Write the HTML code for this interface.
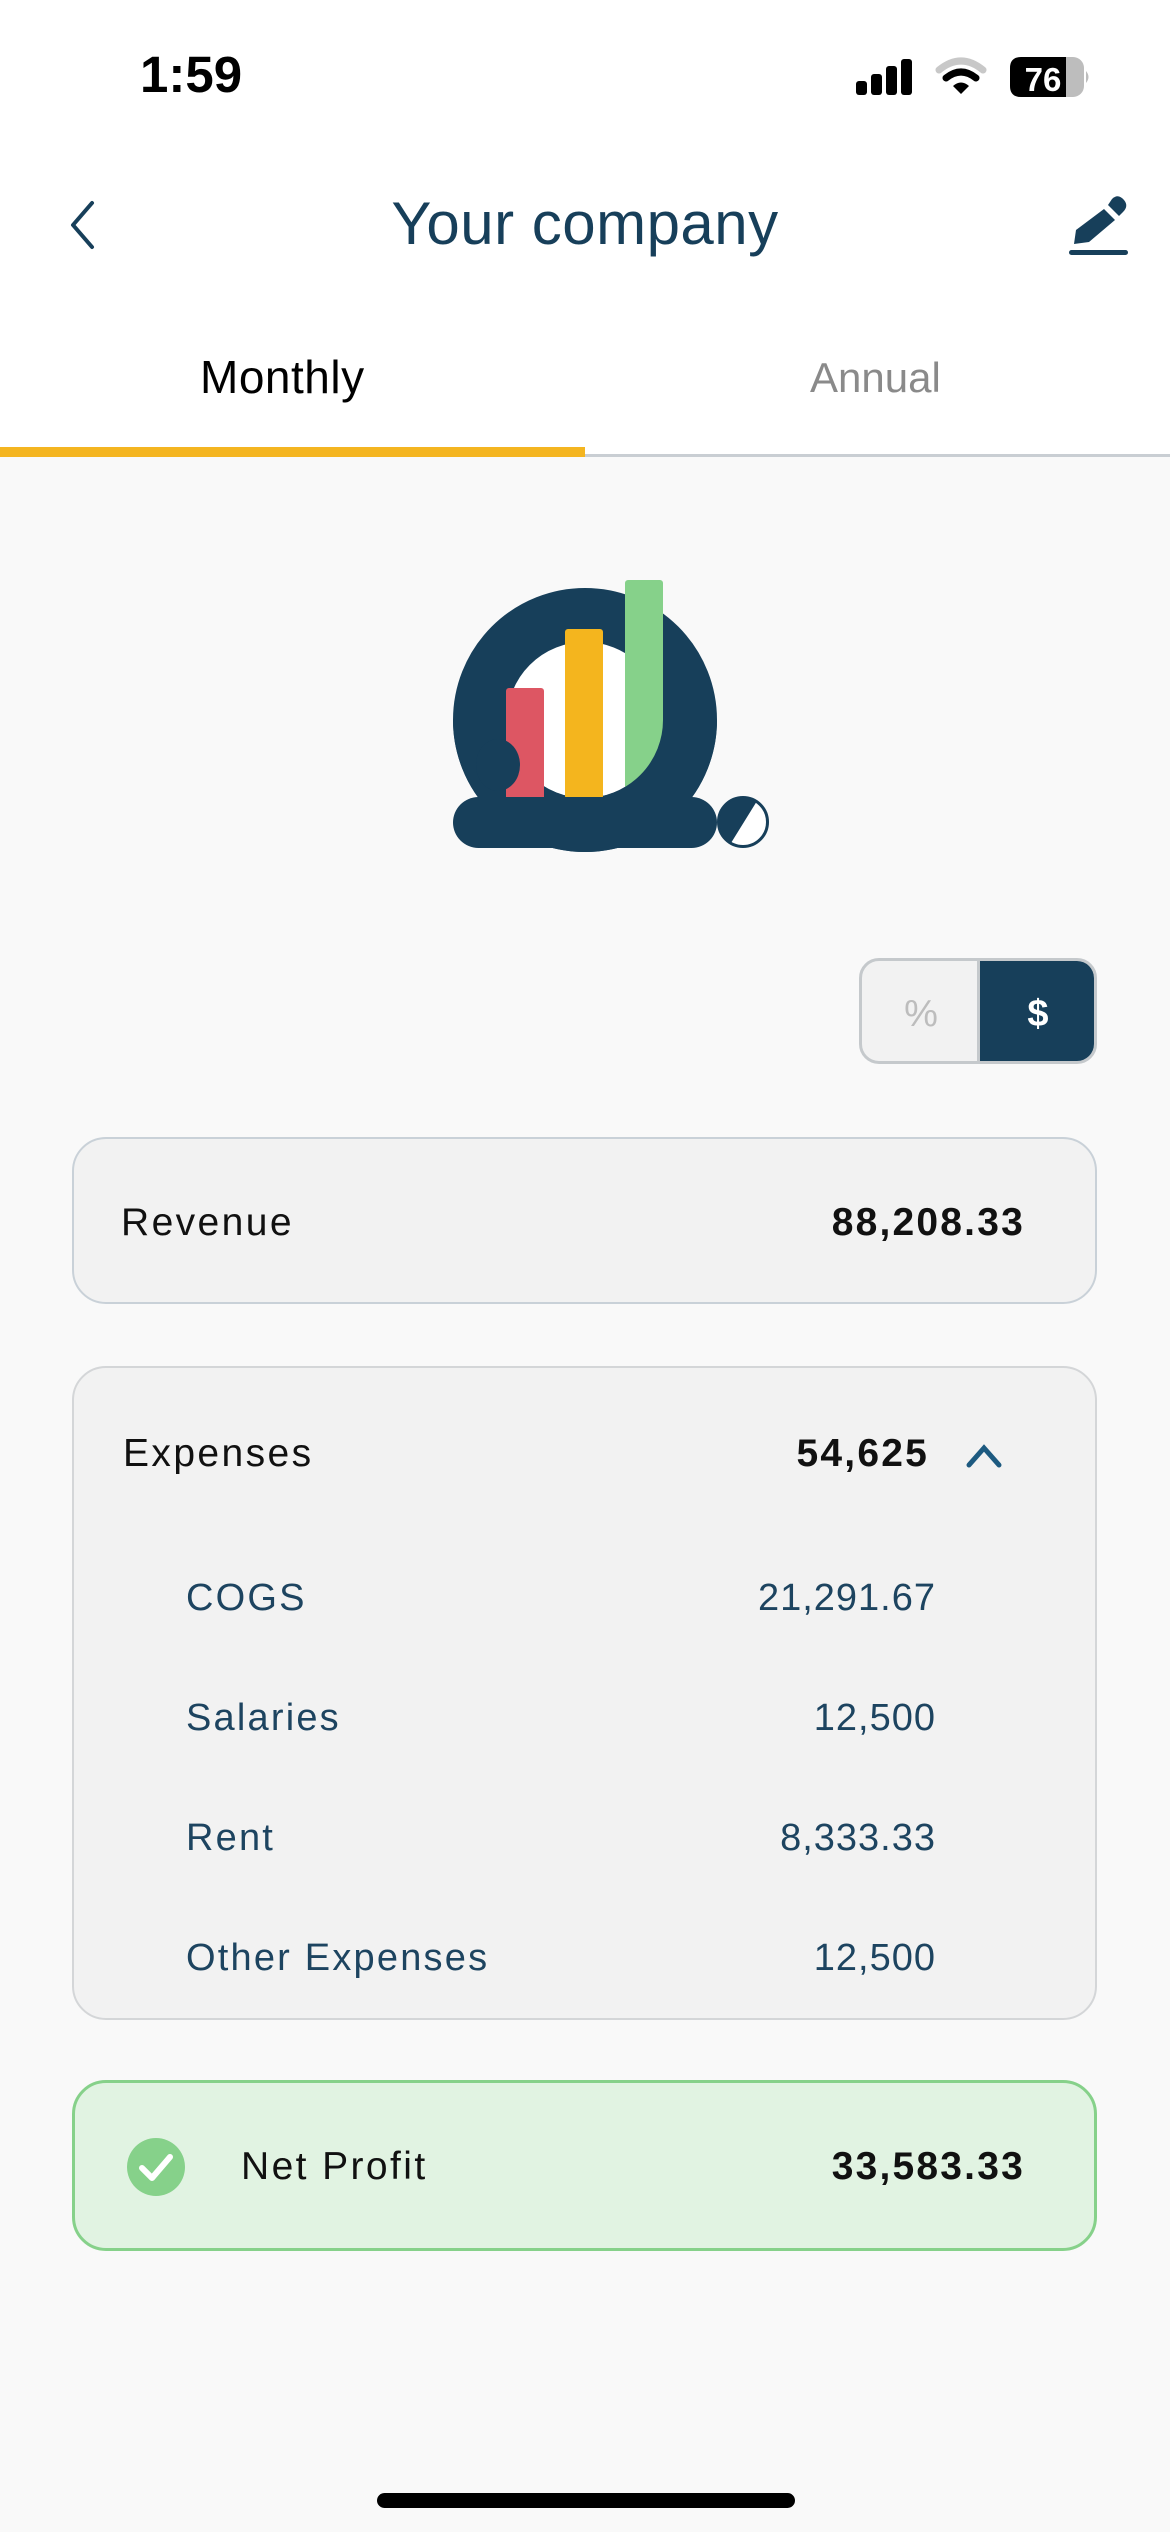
<!DOCTYPE html>
<html><head><meta charset="utf-8">
<style>
*{margin:0;padding:0;box-sizing:border-box}
body{width:1170px;height:2532px;background:#f9f9f9;position:relative;overflow:hidden;font-family:"Liberation Sans",sans-serif}
.a{position:absolute;white-space:nowrap}
.card{position:absolute;left:72px;width:1025px;border-radius:34px;background:#f2f2f2;border:2px solid #c9d1d8}
.lbl{font-size:39px;color:#111;letter-spacing:2.4px}
.num{font-size:39px;font-weight:bold;color:#111;letter-spacing:2.2px}
.it{font-size:38px;color:#1d4460;letter-spacing:2.2px}
</style></head><body>
<div class="a" style="left:0;top:0;width:1170px;height:456px;background:#fff"></div>
<div class="a" style="left:140px;top:45px;font-size:51px;font-weight:bold;color:#000;line-height:60px">1:59</div>
<svg class="a" style="left:850px;top:55px" width="250" height="45">
 <rect x="6" y="26" width="11" height="14" rx="3" fill="#000"/>
 <rect x="21" y="19" width="11" height="21" rx="3" fill="#000"/>
 <rect x="36" y="11" width="11" height="29" rx="3" fill="#000"/>
 <rect x="51" y="4" width="11" height="36" rx="3" fill="#000"/>
 <path d="M89 15 Q111 -3 133 15" stroke="#c8c8c8" stroke-width="7" fill="none" stroke-linecap="round"/>
 <path d="M96 23 Q111 11 126 23" stroke="#000" stroke-width="7" fill="none" stroke-linecap="round"/>
 <path d="M103 31 L111 39 L119 31 Q111 24 103 31Z" fill="#000"/>
 <rect x="160" y="2" width="74" height="40" rx="11" fill="#bdbdbd"/>
 <path d="M171 2 H216 V42 H171 Q160 42 160 31 V13 Q160 2 171 2Z" fill="#000"/>
 <path d="M236 16 Q241 22 236 28Z" fill="#bdbdbd"/>
 <text x="193" y="36" font-size="33" font-weight="bold" fill="#fff" text-anchor="middle" font-family="Liberation Sans">76</text>
</svg>
<svg class="a" style="left:60px;top:195px" width="50" height="60"><path d="M32 8 L13 30 L32 52" stroke="#173f5a" stroke-width="4" fill="none" stroke-linecap="round" stroke-linejoin="round"/></svg>
<div class="a" style="left:0;width:1170px;text-align:center;top:188px;font-size:60px;color:#173f5a;line-height:72px;letter-spacing:0.5px">Your company</div>
<svg class="a" style="left:1065px;top:190px" width="66" height="70">
 <path d="M47 9 Q53 3 59 10 Q64 16 58 22 L54 26 L43 15Z" fill="#173f5a"/>
 <path d="M39 19 L50 30 L24 52 L9 54 L11 40Z" fill="#173f5a"/>
 <rect x="4" y="60" width="59" height="5" rx="2.5" fill="#173f5a"/>
</svg>
<div class="a" style="left:200px;top:348px;font-size:46px;color:#000;line-height:58px;letter-spacing:0.5px">Monthly</div>
<div class="a" style="left:810px;top:350px;font-size:42px;color:#8a8a8a;line-height:56px">Annual</div>
<div class="a" style="left:0;top:454px;width:1170px;height:3px;background:#c9ced3"></div>
<div class="a" style="left:0;top:447px;width:585px;height:10px;background:#f4b520"></div>

<svg class="a" style="left:0;top:0" width="1170" height="900">
 <circle cx="585" cy="720" r="78" fill="#fff"/>
 <circle cx="585" cy="720" r="105" fill="none" stroke="#173f5a" stroke-width="54"/>
 <rect x="625" y="580" width="38" height="215" rx="3" fill="#86d18a"/>
 <path d="M480 720 A105 105 0 0 0 690 720" fill="none" stroke="#173f5a" stroke-width="54"/>
 <rect x="506" y="688" width="38" height="112" rx="3" fill="#dd5663"/>
 <rect x="565" y="629" width="38" height="170" rx="3" fill="#f4b51e"/>
 <ellipse cx="498" cy="765" rx="22" ry="26" fill="#173f5a"/>
 <rect x="453" y="797" width="264" height="51" rx="25.5" fill="#173f5a"/>
 <circle cx="743" cy="822" r="24.5" fill="#fff" stroke="#173f5a" stroke-width="3"/>
 <path d="M757 801 L731 843 A24 24 0 0 1 757 801Z" fill="#173f5a"/>
</svg>

<div class="a" style="left:859px;top:958px;width:238px;height:106px;border-radius:20px;border:3px solid #c5c9cc;background:#f2f2f2;overflow:hidden">
 <div class="a" style="left:117px;top:0;width:118px;height:100px;background:#173f5a"></div>
 <div class="a" style="left:0;top:0;width:118px;height:100px;border-right:3px solid #c5c9cc"></div>
 <div class="a" style="left:0;width:118px;top:32px;text-align:center;font-size:38px;color:#bdbdbd">%</div>
 <div class="a" style="left:117px;width:118px;top:32px;text-align:center;font-size:38px;color:#fff;font-weight:bold">$</div>
</div>

<div class="card" style="top:1137px;height:167px"></div>
<div class="a lbl" style="left:121px;top:1201px">Revenue</div>
<div class="a num" style="right:145px;top:1201px">88,208.33</div>

<div class="card" style="top:1366px;height:654px;border-color:#d4d6d8"></div>
<div class="a lbl" style="left:123px;top:1432px">Expenses</div>
<div class="a num" style="right:241px;top:1432px">54,625</div>
<svg class="a" style="left:964px;top:1440px" width="44" height="30"><path d="M5 25 L20 8 L35 25" stroke="#1d5a80" stroke-width="5" fill="none" stroke-linecap="round"/></svg>
<div class="a it" style="left:186px;top:1577px">COGS</div>
<div class="a it" style="right:234px;top:1577px;letter-spacing:1px">21,291.67</div>
<div class="a it" style="left:186px;top:1697px">Salaries</div>
<div class="a it" style="right:234px;top:1697px;letter-spacing:1px">12,500</div>
<div class="a it" style="left:186px;top:1817px">Rent</div>
<div class="a it" style="right:234px;top:1817px;letter-spacing:1px">8,333.33</div>
<div class="a it" style="left:186px;top:1937px">Other Expenses</div>
<div class="a it" style="right:234px;top:1937px;letter-spacing:1px">12,500</div>

<div class="card" style="top:2080px;height:171px;background:#e1f3e2;border:3px solid #86d18a"></div>
<svg class="a" style="left:126px;top:2137px" width="60" height="60"><circle cx="30" cy="30" r="29" fill="#86d18a"/><path d="M16 31 L26 41 L44 20" stroke="#fff" stroke-width="6" fill="none" stroke-linecap="round" stroke-linejoin="round"/></svg>
<div class="a lbl" style="left:241px;top:2145px">Net Profit</div>
<div class="a num" style="right:145px;top:2145px">33,583.33</div>

<div class="a" style="left:377px;top:2493px;width:418px;height:15px;border-radius:8px;background:#000"></div>
</body></html>
